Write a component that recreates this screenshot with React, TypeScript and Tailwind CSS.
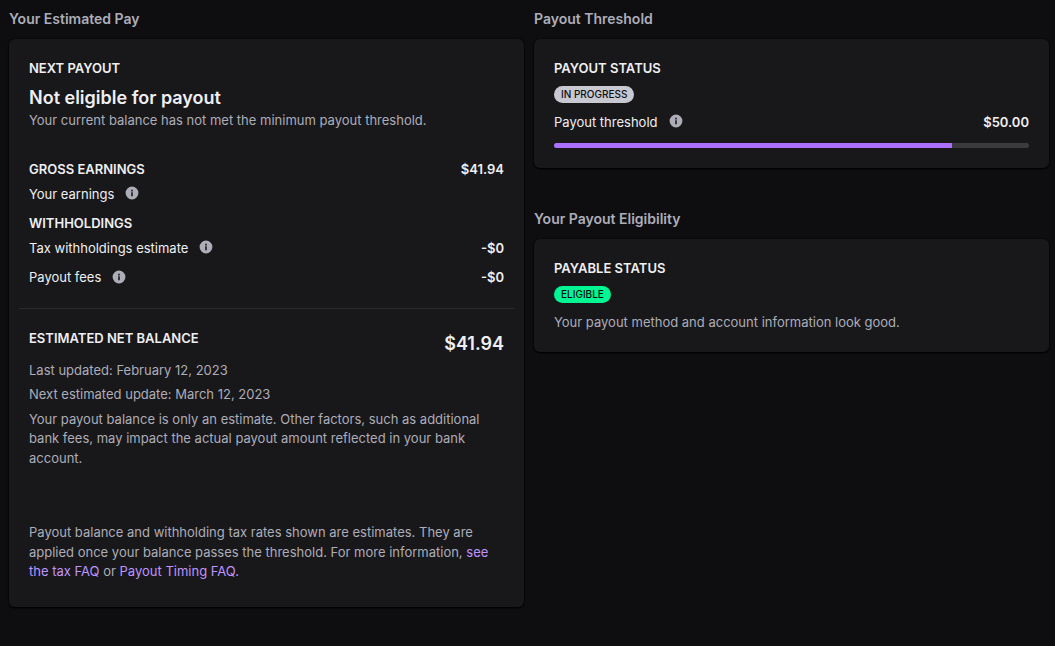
import type { ReactNode } from "react";

function InfoButton({ label }: { label: string }) {
  return (
    <button type="button" aria-label={label} className="mb-[2px] ml-[10px] flex size-4 items-center justify-center text-[#adadb8]">
      <svg viewBox="0 0 20 20" className="size-4" fill="currentColor" aria-hidden="true">
        <path fillRule="evenodd" clipRule="evenodd" d="M10 18a8 8 0 1 0 0-16 8 8 0 0 0 0 16zM9 6h2v2H9V6zm0 3.200h2V14H9V9.200z" />
      </svg>
    </button>
  );
}

function Section({ title, children }: { title: string; children: ReactNode }) {
  return (
    <section>
      <h2 className="mb-[10px] text-[14px] leading-5 font-semibold text-[#adadb8]">{title}</h2>
      <div className="rounded-md bg-[#18181b] p-5 shadow-[0_1px_2px_#000,0_0_2px_#000]">{children}</div>
    </section>
  );
}

function Label({ children }: { children: ReactNode }) {
  return <h3 className="font-semibold uppercase">{children}</h3>;
}

function Badge({ color, children }: { color: string; children: ReactNode }) {
  return (
    <div className="mt-[7px] flex">
      <span className={`rounded-full px-[7px] text-[10px] leading-[17px] font-medium text-[#0e0e10] ${color}`}>{children}</span>
    </div>
  );
}

function Row({ label, amount, className = "" }: { label: string; amount?: string; className?: string }) {
  return (
    <div className={`flex items-center justify-between ${className}`}>
      <div className="flex items-center">
        <span>{label}</span>
        <InfoButton label={`About ${label.toLowerCase()}`} />
      </div>
      {amount && <span className="font-semibold">{amount}</span>}
    </div>
  );
}

export default function App() {
  return (
    <main className="min-h-screen bg-[#0e0e10] pt-[9px] pr-[6px] pb-10 pl-[9px] font-['Inter',sans-serif] text-[13px] leading-normal text-[#efeff1]">
      <div className="grid grid-cols-2 items-start gap-[10px]">
        <Section title="Your Estimated Pay">
          <Label>Next payout</Label>
          <p className="mt-[7px] mb-px text-[18px] leading-6 font-semibold">Not eligible for payout</p>
          <p className="text-[#adadb8]">Your current balance has not met the minimum payout threshold.</p>

          <div className="mt-[30px] flex justify-between">
            <Label>Gross earnings</Label>
            <span className="font-semibold">$41.94</span>
          </div>
          <Row label="Your earnings" className="mt-[5px]" />
          <div className="mt-[10px]">
            <Label>Withholdings</Label>
          </div>
          <Row label="Tax withholdings estimate" amount="-$0" className="mt-[5px]" />
          <Row label="Payout fees" amount="-$0" className="mt-[10px]" />

          <hr className="-mx-[10px] my-5 border-t border-[#2a2a2d]" />

          <div className="flex items-start justify-between">
            <Label>Estimated net balance</Label>
            <strong className="text-[18px] leading-[30px] font-semibold">$41.94</strong>
          </div>
          <div className="mt-[2px] flex flex-col gap-[5px] text-[#adadb8]">
            <p>Last updated: February 12, 2023</p>
            <p>Next estimated update: March 12, 2023</p>
            <p>
              Your payout balance is only an estimate. Other factors, such as additional bank fees, may impact the
              actual payout amount reflected in your bank account.
            </p>
          </div>
          <p className="mt-[55px] mb-[5px] text-[#adadb8]">
            Payout balance and withholding tax rates shown are estimates. They are applied once your balance passes the
            threshold. For more information,{" "}
            <a href="#tax-faq" className="text-[#bf94ff]">see the tax FAQ</a> or{" "}
            <a href="#payout-timing" className="text-[#bf94ff]">Payout Timing FAQ.</a>
          </p>
        </Section>

        <div className="flex flex-col gap-[41px]">
          <Section title="Payout Threshold">
            <Label>Payout status</Label>
            <Badge color="bg-[#c8c8d0]">IN PROGRESS</Badge>
            <Row label="Payout threshold" amount="$50.00" className="mt-[10px]" />
            <div
              role="progressbar"
              aria-label="Payout threshold"
              aria-valuemin={0}
              aria-valuemax={50}
              aria-valuenow={41.94}
              className="mt-[11px] h-[5px] overflow-hidden rounded-sm bg-[#3b3b3d]"
            >
              <div className="h-full bg-[#a970ff]" style={{ width: `${(41.94 / 50) * 100}%` }} />
            </div>
          </Section>

          <Section title="Your Payout Eligibility">
            <Label>Payable status</Label>
            <Badge color="bg-[#00f593]">ELIGIBLE</Badge>
            <p className="mt-[10px] text-[#adadb8]">Your payout method and account information look good.</p>
          </Section>
        </div>
      </div>
    </main>
  );
}
